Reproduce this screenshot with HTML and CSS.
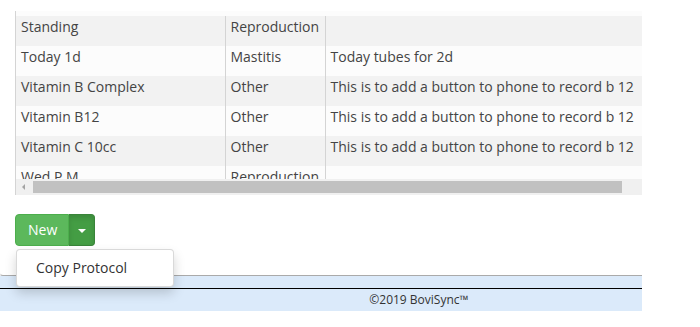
FILE: index.html
```html
<!DOCTYPE html>
<html lang="en">
<head>
    <meta charset="UTF-8">
    <meta name="viewport" content="width=device-width, initial-scale=1.0">
    <title>Protocols</title>
    <link rel="stylesheet" href="styles.css">
</head>
<body>
    <div class="page">
        <div class="panel">
            <div class="grid">
                <div class="grid-viewport">
                    <table class="protocols">
                        <colgroup>
                            <col class="col-name">
                            <col class="col-type">
                            <col class="col-notes">
                        </colgroup>
                        <tbody>
                            <tr><td>Standing</td><td>Reproduction</td><td></td></tr>
                            <tr><td>Today 1d</td><td>Mastitis</td><td>Today tubes for 2d</td></tr>
                            <tr><td>Vitamin B Complex</td><td>Other</td><td>This is to add a button to phone to record b 12</td></tr>
                            <tr><td>Vitamin B12</td><td>Other</td><td>This is to add a button to phone to record b 12</td></tr>
                            <tr><td>Vitamin C 10cc</td><td>Other</td><td>This is to add a button to phone to record b 12</td></tr>
                            <tr><td>Wed P.M.</td><td>Reproduction</td><td></td></tr>
                        </tbody>
                    </table>
                </div>
                <div class="hscroll">
                    <span class="hscroll-arrow"></span>
                    <span class="hscroll-thumb"></span>
                </div>
            </div>

            <div class="actions">
                <div class="btn-group">
                    <button class="btn btn-new">New</button><button class="btn btn-toggle"><span class="caret"></span></button>
                    <ul class="dropdown-menu">
                        <li>Copy Protocol</li>
                    </ul>
                </div>
            </div>
        </div>

        <footer class="footer">
            <div class="footer-line">&copy;2019 BoviSync&trade;</div>
        </footer>
    </div>
</body>
</html>
```

FILE: styles.css
```css
body {
    margin: 0;
    padding: 0;
    background: #fff;
    font-family: 'Open Sans', 'Liberation Sans', sans-serif;
    color: #444;
}

.page {
    width: 642px;
}

.panel {
    box-sizing: border-box;
    height: 276px;
    margin-left: -1px;
    padding: 11px 0 0 15px;
    border-bottom: 1px solid #aaa;
    border-left: 1px solid #eee;
    border-bottom-left-radius: 4px;
}

.grid {
    border-left: 1px solid #d4d4d4;
}

.grid-viewport {
    height: 163px;
    padding-top: 5px;
    background: #fcfcfc;
    overflow: hidden;
}

.protocols {
    border-collapse: collapse;
    table-layout: fixed;
    width: 626px;
    font-size: 14px;
}

.col-name {
    width: 209px;
}

.col-type {
    width: 100px;
}

.protocols td {
    height: 30px;
    padding: 0 0 8px 5px;
    line-height: 22px;
    vertical-align: top;
    white-space: nowrap;
    overflow: hidden;
    box-sizing: border-box;
    border-right: 1px solid #d4d4d4;
}

.protocols td:last-child {
    border-right: none;
}

.protocols tr:nth-child(odd) {
    background: #f2f2f2;
}

.protocols tr:nth-child(even) {
    background: #fcfcfc;
}

.hscroll {
    position: relative;
    height: 16px;
    background: #f0f0f0;
}

.hscroll-arrow {
    position: absolute;
    left: 6px;
    top: 5px;
    width: 0;
    height: 0;
    border-top: 3px solid transparent;
    border-bottom: 3px solid transparent;
    border-right: 3px solid #a3a3a3;
}

.hscroll-thumb {
    position: absolute;
    left: 17px;
    top: 2px;
    width: 589px;
    height: 12px;
    background: #c1c1c1;
}

.actions {
    margin-top: 19px;
}

.btn-group {
    position: relative;
    display: inline-flex;
}

.btn {
    font-family: inherit;
    font-size: 14px;
    line-height: 20px;
    height: 32px;
    padding: 5px 12px;
    color: #fff;
    border: 1px solid #4cae4c;
    background: #5cb85c;
    cursor: pointer;
}

.btn-new {
    width: 54px;
    border-radius: 4px 0 0 4px;
}

.btn-toggle {
    width: 26px;
    padding: 0;
    border-left: none;
    border-color: #398439;
    background: #449d44;
    border-radius: 0 4px 4px 0;
    box-shadow: inset 0 3px 5px rgba(0, 0, 0, 0.125);
}

.caret {
    display: inline-block;
    width: 0;
    height: 0;
    vertical-align: middle;
    border-top: 4px solid #fff;
    border-left: 4px solid transparent;
    border-right: 4px solid transparent;
}

.dropdown-menu {
    position: absolute;
    top: 35px;
    left: 1px;
    z-index: 10;
    width: 158px;
    box-sizing: border-box;
    margin: 0;
    padding: 5px 0;
    list-style: none;
    background: #fff;
    border: 1px solid rgba(0, 0, 0, 0.15);
    border-radius: 4px;
    box-shadow: 0 6px 12px rgba(0, 0, 0, 0.175);
    font-size: 14px;
    color: #333;
}

.dropdown-menu li {
    padding: 3px 20px 3px 19px;
    line-height: 20px;
    white-space: nowrap;
}

.footer {
    background: #dbeafa;
    padding-top: 12px;
    height: 23px;
}

.footer-line {
    border-top: 1px solid #000;
    height: 22px;
    line-height: 22px;
    font-size: 12px;
    color: #333;
    text-align: center;
    padding-left: 196px;
}
```
